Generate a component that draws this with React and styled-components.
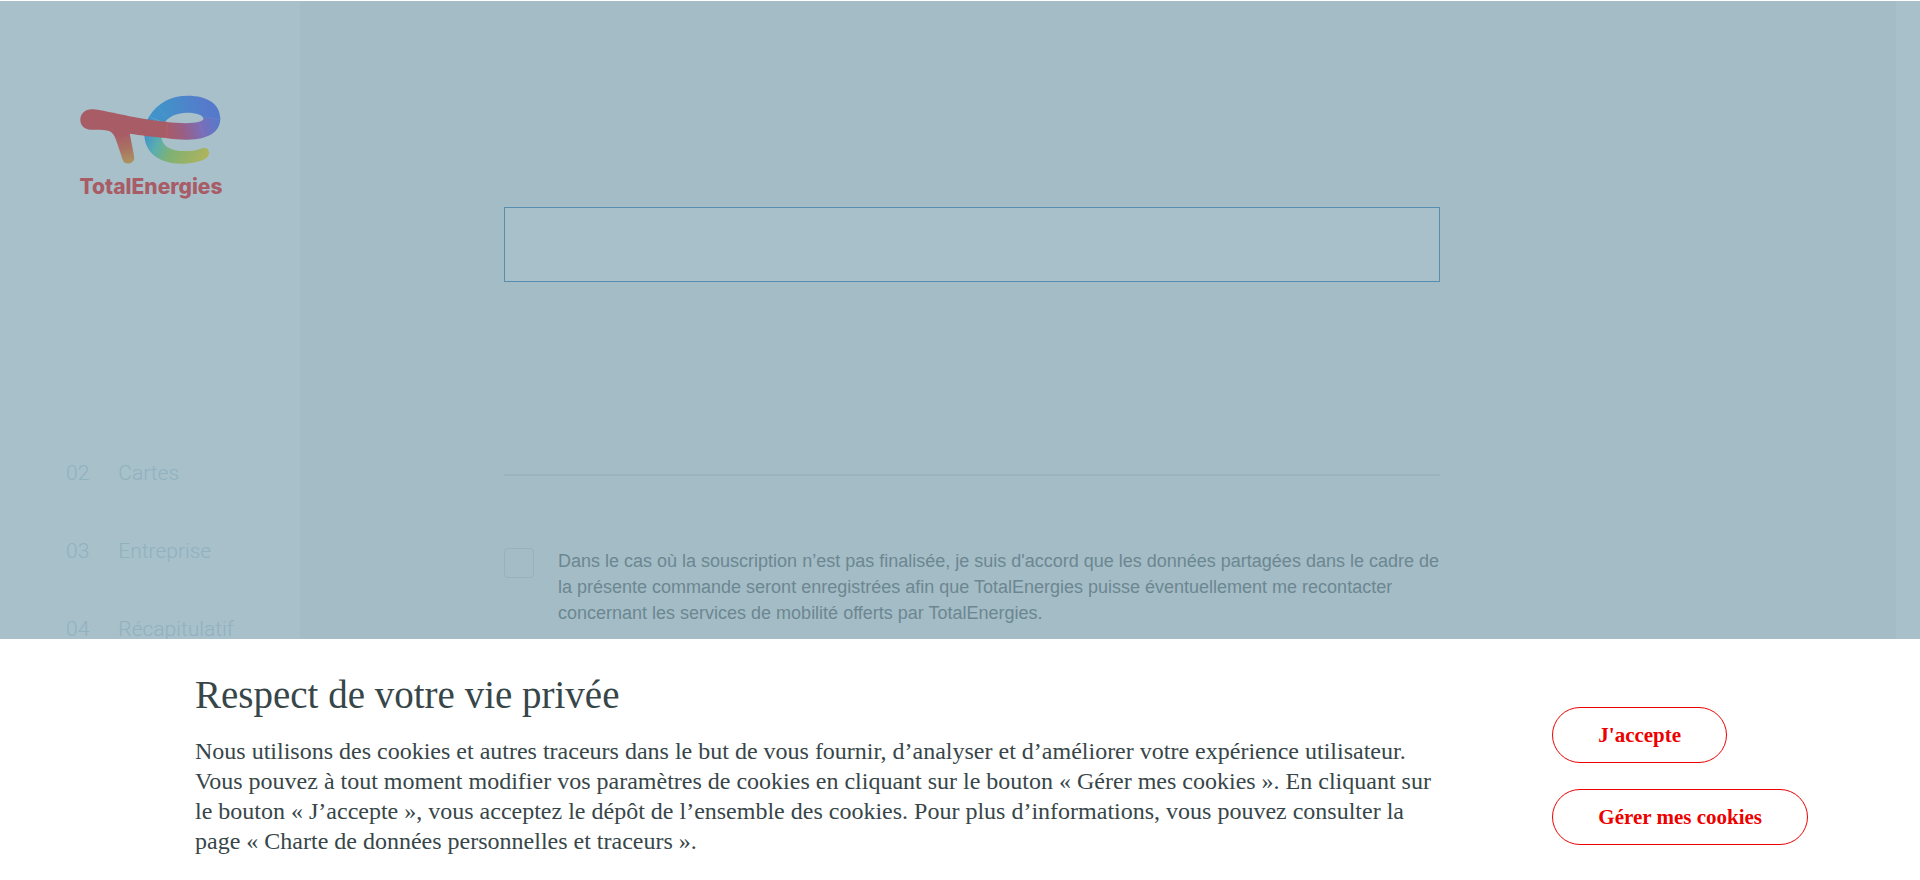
import React from "react";
import styled, { createGlobalStyle } from "styled-components";

const GlobalStyle = createGlobalStyle`
  *, *::before, *::after { box-sizing: border-box; }
  body { margin: 0; background: #fff; overflow: hidden; }
`;

const Page = styled.div`
  display: flex;
  flex-direction: column;
  height: 100vh;
  padding-top: 1px;
`;

const Shell = styled.div`
  flex: 1;
  min-height: 0;
  overflow: hidden;
  display: flex;
  background: #a4bcc6;
  border-right: 24px solid #a8c0ca;
`;

const Sidebar = styled.aside`
  flex: none;
  width: 300px;
  padding: 94px 64px 0 66px;
  background: #a8c0ca;
`;

const Brand = styled.a`
  display: flex;
  flex-direction: column;
  align-items: center;
  width: 170px;
  text-decoration: none;
  color: #a85c66;
`;

const Wordmark = styled.span`
  margin-top: 8px;
  font: 800 21px/28px Inter, sans-serif;
`;

const Steps = styled.ol`
  list-style: none;
  margin: 256px 0 0;
  padding: 0;
  display: flex;
  flex-direction: column;
  gap: 46px;
`;

const Step = styled.li`
  display: flex;
  gap: 29px;
  font: 300 21px/32px Roboto, sans-serif;
  color: #90b1c0;
`;

const Main = styled.main`
  flex: 1;
  padding: 206px 456px 0 204px;
`;

const Form = styled.form`
  display: flex;
  flex-direction: column;
`;

const Notice = styled.section`
  height: 75px;
  border: 1px solid #578db0;
  background: #a8c0ca;
`;

const Divider = styled.hr`
  width: 100%;
  height: 2px;
  margin: 192px 0 72px;
  border: 0;
  background: #9ab4bf;
`;

const Consent = styled.div`
  display: flex;
  gap: 24px;
`;

const Checkbox = styled.input`
  appearance: none;
  flex: none;
  width: 30px;
  height: 30px;
  margin: 0;
  border: 1px solid #98b1bd;
  border-radius: 4px;
`;

const ConsentLabel = styled.label`
  font: 18px/26px "Liberation Sans", sans-serif;
  color: #6c8791;
`;

const CookieBanner = styled.section`
  flex: none;
  display: flex;
  align-items: center;
  gap: 112px;
  padding: 32px 112px 24px 195px;
  background: #fff;
  color: #374649;
  font-family: "Liberation Serif", serif;
`;

const BannerText = styled.div`
  flex: 1;
`;

const Title = styled.h2`
  margin: 0 0 18px;
  font-size: 39px;
  line-height: 47px;
  font-weight: 400;
`;

const Paragraph = styled.p`
  margin: 0;
  font-size: 24px;
  line-height: 30px;
`;

const Actions = styled.div`
  flex: none;
  display: flex;
  flex-direction: column;
  align-items: flex-start;
  gap: 26px;
  padding-top: 24px;
`;

const PillButton = styled.button`
  height: 56px;
  padding: 0 45px;
  border: 1px solid #ed0000;
  border-radius: 28px;
  background: #fff;
  color: #ed0000;
  font: 700 21px/26px "Liberation Serif", serif;
`;

function Emblem() {
  return (
    <svg width="142" height="70" viewBox="59 43 426 210" fill="none" aria-hidden="true">
      <defs>
        <linearGradient id="ribbonLow" gradientUnits="userSpaceOnUse" x1="255" y1="150" x2="440" y2="230">
          <stop offset="0" stopColor="#3f8fcb" />
          <stop offset=".24" stopColor="#5aaeae" />
          <stop offset=".48" stopColor="#80b173" />
          <stop offset="1" stopColor="#afb35c" />
        </linearGradient>
        <linearGradient id="ribbonTop" gradientUnits="userSpaceOnUse" x1="260" y1="110" x2="440" y2="80">
          <stop offset="0" stopColor="#4094cd" />
          <stop offset=".3" stopColor="#4391c9" />
          <stop offset="1" stopColor="#567acb" />
        </linearGradient>
        <linearGradient id="ribbonBack" gradientUnits="userSpaceOnUse" x1="320" y1="150" x2="476" y2="118">
          <stop offset="0" stopColor="#a85c66" />
          <stop offset=".3" stopColor="#985f86" />
          <stop offset=".65" stopColor="#7a6eb9" />
          <stop offset="1" stopColor="#567acb" />
        </linearGradient>
        <linearGradient id="stem" gradientUnits="userSpaceOnUse" x1="185" y1="160" x2="205" y2="248">
          <stop offset="0" stopColor="#a85c66" />
          <stop offset=".45" stopColor="#a96f63" />
          <stop offset="1" stopColor="#ab9560" />
        </linearGradient>
      </defs>
      <path
        d="M266 108C292 66 332 45 382 45C442 45 480 70 480 115H430C429 103 408 96 380 96C352 96 326 106 312 126Z"
        fill="url(#ribbonTop)"
      />
      <path
        d="M252 160C252 215 296 249 362 249C394 249 420 242 435 234C444 229 448 219 445 210C442 202 434 199 425 203C408 211 386 212 366 211C330 210 305 195 303 168L310 126L266 108C256 124 252 142 252 160Z"
        fill="url(#ribbonLow)"
      />
      <path
        d="M318 124C364 129 430 131 430 113L480 113C480 154 444 178 378 177C357 177 336 175 316 172Z"
        fill="url(#ribbonBack)"
      />
      <path
        d="M137 149C157 151 164 168 169 183L187 237C191 249 203 251 213 246C221 242 223 234 221 225L208 158Z"
        fill="url(#stem)"
      />
      <path
        d="M94 86C119 86 190 105 258 116Q288 121 323 124L318 172C285 169 239 164 208 159L181 170L158 155C140 145 116 148 91 147C72 146 60 134 60 117C60 99 74 86 94 86Z"
        fill="#a85c66"
      />
      <path d="M322 124L318 172M292 77L318 108M430 109L480 117M418 128L430 167" stroke="#ffffff" strokeOpacity=".15" strokeWidth="1" />
    </svg>
  );
}

const steps = [
  ["02", "Cartes"],
  ["03", "Entreprise"],
  ["04", "Récapitulatif"],
];

export default function App() {
  return (
    <Page>
      <GlobalStyle />
      <Shell>
        <Sidebar>
          <Brand href="#">
            <Emblem />
            <Wordmark>TotalEnergies</Wordmark>
          </Brand>
          <Steps>
            {steps.map(([number, label]) => (
              <Step key={number}>
                <span>{number}</span>
                <span>{label}</span>
              </Step>
            ))}
          </Steps>
        </Sidebar>
        <Main>
          <Form>
            <Notice />
            <Divider />
            <Consent>
              <Checkbox type="checkbox" id="consent" />
              <ConsentLabel htmlFor="consent">
                Dans le cas où la souscription n’est pas finalisée, je suis d'accord que les données partagées dans le
                cadre de la présente commande seront enregistrées afin que TotalEnergies puisse éventuellement me
                recontacter concernant les services de mobilité offerts par TotalEnergies.
              </ConsentLabel>
            </Consent>
          </Form>
        </Main>
      </Shell>
      <CookieBanner aria-labelledby="cookie-title">
        <BannerText>
          <Title id="cookie-title">Respect de votre vie privée</Title>
          <Paragraph>
            Nous utilisons des cookies et autres traceurs dans le but de vous fournir, d’analyser et d’améliorer votre
            expérience utilisateur. Vous pouvez à tout moment modifier vos paramètres de cookies en cliquant sur le
            bouton « Gérer mes cookies ». En cliquant sur le bouton « J’accepte », vous acceptez le dépôt de l’ensemble
            des cookies. Pour plus d’informations, vous pouvez consulter la page « Charte de données personnelles et
            traceurs ».
          </Paragraph>
        </BannerText>
        <Actions>
          <PillButton type="button">J'accepte</PillButton>
          <PillButton type="button">Gérer mes cookies</PillButton>
        </Actions>
      </CookieBanner>
    </Page>
  );
}
